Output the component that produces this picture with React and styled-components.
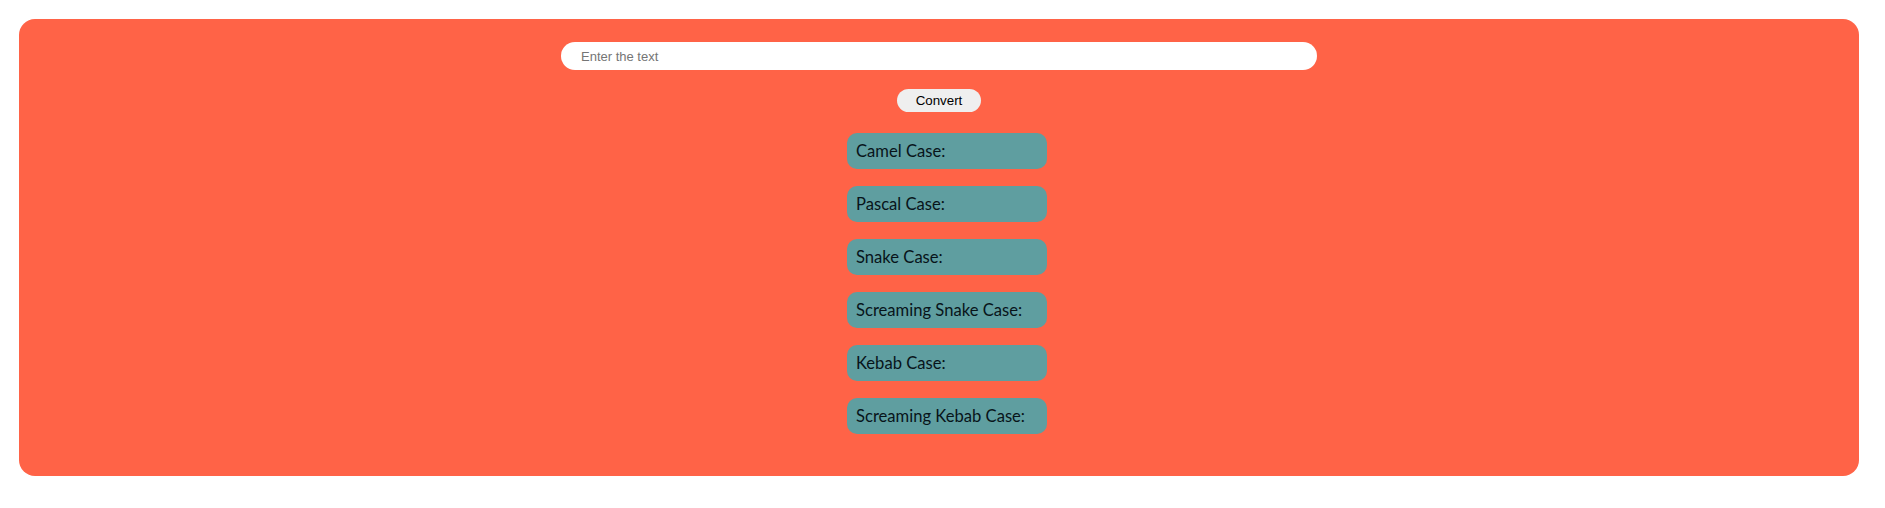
import React, { useState } from "react";
import styled, { createGlobalStyle } from "styled-components";

const GlobalStyle = createGlobalStyle`
  html, body {
    margin: 0;
    padding: 0;
    background: #ffffff;
  }
`;

const Panel = styled.div`
  margin: 19px 26px 0 19px;
  height: 457px;
  box-sizing: border-box;
  padding: 23px 0 0;
  background-color: #ff6347;
  border-radius: 16px;
  display: flex;
  flex-direction: column;
  align-items: center;
`;

const TextInput = styled.input`
  width: 756px;
  height: 28px;
  box-sizing: border-box;
  border: none;
  outline: none;
  border-radius: 14px;
  padding: 0 20px;
  background: #ffffff;
  font-family: "Liberation Sans", Arial, sans-serif;
  font-size: 13px;
  color: #222;

  &::placeholder {
    color: #757575;
  }
`;

const ConvertButton = styled.button`
  margin-top: 19px;
  width: 84px;
  height: 23px;
  border: none;
  border-radius: 12px;
  background: #efefef;
  font-family: "Liberation Sans", Arial, sans-serif;
  font-size: 13.33px;
  color: #000;
  padding: 0;
  cursor: pointer;
`;

const Results = styled.div`
  margin-top: 21px;
  margin-left: 16px;
  display: flex;
  flex-direction: column;
  gap: 17px;
`;

const ResultCard = styled.div`
  width: 200px;
  height: 36px;
  box-sizing: border-box;
  padding: 0 9px;
  display: flex;
  align-items: center;
  background-color: #5f9ea0;
  border-radius: 10px;
  font-family: Lato, "Noto Sans", sans-serif;
  font-size: 16.6px;
  color: #08141a;
`;

const cases = [
  "Camel Case:",
  "Pascal Case:",
  "Snake Case:",
  "Screaming Snake Case:",
  "Kebab Case:",
  "Screaming Kebab Case:",
];

export default function App() {
  const [text, setText] = useState("");

  return (
    <>
      <GlobalStyle />
      <Panel>
        <TextInput
          placeholder="Enter the text"
          value={text}
          onChange={(e) => setText(e.target.value)}
        />
        <ConvertButton>Convert</ConvertButton>
        <Results>
          {cases.map((label) => (
            <ResultCard key={label}>{label}</ResultCard>
          ))}
        </Results>
      </Panel>
    </>
  );
}
